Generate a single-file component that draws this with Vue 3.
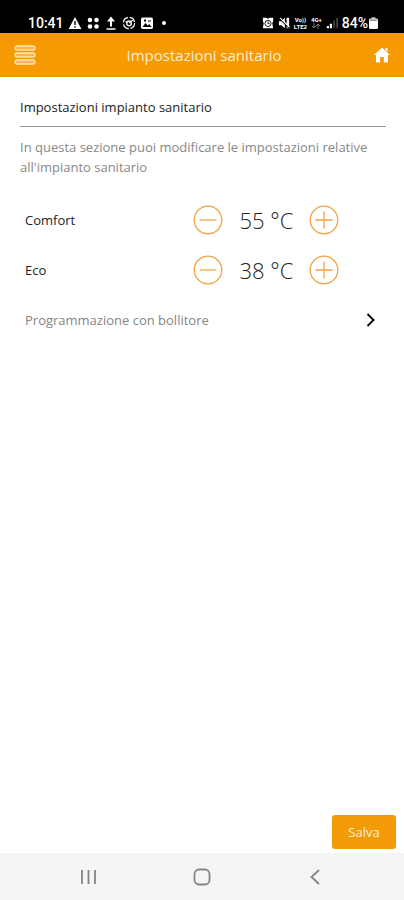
<script setup>
import { reactive } from 'vue'

const settings = reactive([
  { id: 'comfort', label: 'Comfort', value: 55 },
  { id: 'eco', label: 'Eco', value: 38 },
])
</script>

<template>
  <div class="screen">
    <div class="status">
      <div class="status-group">
        <span class="clock">10:41</span>
        <svg class="glyph" viewBox="0 0 14 14" aria-hidden="true">
          <path d="M7 1 13.4 13H.6z" fill="#fff" />
          <path d="M7 5v4M7 10.3v1.5" stroke="#000" stroke-width="1.4" />
        </svg>
        <svg class="glyph" viewBox="0 0 14 14" aria-hidden="true">
          <g fill="#fff">
            <circle cx="4" cy="4" r="2.3" /><circle cx="10.5" cy="4" r="2.3" />
            <circle cx="4" cy="10.5" r="2.3" /><circle cx="10.5" cy="10.5" r="2.3" />
          </g>
        </svg>
        <svg class="glyph" viewBox="0 0 14 14" aria-hidden="true">
          <path d="M7 10.500V3" stroke="#fff" stroke-width="2" />
          <path d="M7 .5 11 5.500H3z" fill="#fff" />
          <path d="M2.500 13h9" stroke="#bbb" stroke-width="2" />
        </svg>
        <svg class="glyph" viewBox="0 0 14 14" aria-hidden="true">
          <g fill="none" stroke="#eee">
            <circle cx="7" cy="7" r="5.6" stroke-width="1.3" stroke-dasharray="7 1.8" />
            <circle cx="7" cy="7.4" r="2.3" stroke-width="1.5" />
            <path d="m7 7 4-3M3.5 5.5l2 1" stroke-width="1.2" />
          </g>
        </svg>
        <svg class="glyph" viewBox="0 0 14 14" aria-hidden="true">
          <rect x="1" y="1.5" width="12" height="11.5" rx="1.8" fill="#fff" />
          <path d="m2.5 11 3-4 2.2 2.5L9.2 8l2.5 3zM4 3.5h2v2H4zM8 4.5h3v1H8z" fill="#000" />
        </svg>
        <span class="dot"></span>
      </div>
      <div class="status-group right">
        <svg class="glyph small" viewBox="0 0 14 14" aria-hidden="true">
          <path d="M1 1h4l2 1 2-1h4v4l-1 2 1 6H1l1-6-1-2z" fill="#fff" />
          <circle cx="7" cy="7.5" r="3.6" fill="none" stroke="#000" />
          <path d="M7 5.3v2.5h2" fill="none" stroke="#000" />
        </svg>
        <svg class="glyph small" viewBox="0 0 14 14" aria-hidden="true">
          <path d="M1 5h3l4-4v12L4 9.5H1zM10 1h3v12h-3z" fill="#fff" />
          <path d="m1 1 12 12" stroke="#000" stroke-width="1.4" />
          <path d="m2.5 1 11 11" stroke="#fff" stroke-width="1.3" />
        </svg>
        <span class="volte"><span>Vo))</span><span>LTE2</span></span>
        <span class="network">
          <span>4G+</span>
          <svg viewBox="0 0 10 6" aria-hidden="true">
            <path d="M3 0v5M1 3l2 2 2-2M7 6V1M5 3l2-2 2 2" fill="none" stroke="#777" />
          </svg>
        </span>
        <svg class="glyph small" viewBox="0 0 14 14" aria-hidden="true">
          <path d="M1 10.500h2.500V13H1zM4.500 8H7v5H4.500z" fill="#fff" />
          <path d="M8.500 4h2v9h-2zM12 1h2v12h-2z" fill="#444" />
        </svg>
        <span class="battery-text">84%</span>
        <svg class="battery" viewBox="0 0 9 12" aria-hidden="true">
          <path d="M2.500 0h4v2h-4z" fill="#888" />
          <rect y="1.500" width="9" height="10.500" rx="1.500" fill="#fff" />
          <path d="M1 3.200h7" stroke="#888" stroke-width="1.500" />
        </svg>
      </div>
    </div>

    <header class="bar">
      <button class="icon-button" type="button" aria-label="Menu">
        <svg class="menu-icon" viewBox="0 0 22 20" aria-hidden="true">
          <g fill="#f9b64b" stroke="#ffe3b3" stroke-width="1.4">
            <rect x="1" y="1" width="20" height="4" rx="2" />
            <rect x="1" y="8" width="20" height="4" rx="2" />
            <rect x="1" y="15" width="20" height="4" rx="2" />
          </g>
        </svg>
      </button>
      <h1>Impostazioni sanitario</h1>
      <a class="home" href="#" aria-label="Home">
        <svg class="home-icon" viewBox="0 0 16 16" aria-hidden="true">
          <path d="M8 .5 16 8h-2v7.500H9.800V10H6.200v5.500H2V8H0zM11.500 1h2v4l-2-2z" fill="#fff" />
        </svg>
      </a>
    </header>

    <main class="content">
      <h2>Impostazioni impianto sanitario</h2>
      <p>In questa sezione puoi modificare le impostazioni relative all'impianto sanitario</p>

      <div v-for="item in settings" :key="item.id" class="row">
        <span :id="item.id" class="label">{{ item.label }}</span>
        <div class="stepper" role="group" :aria-labelledby="item.id">
          <button type="button" class="round" :aria-label="`Diminuisci ${item.label}`" @click="item.value--">
            <svg viewBox="0 0 30 30" aria-hidden="true">
              <circle cx="15" cy="15" r="13.800" />
              <path d="M6.500 15h17" />
            </svg>
          </button>
          <output>{{ item.value }} °C</output>
          <button type="button" class="round" :aria-label="`Aumenta ${item.label}`" @click="item.value++">
            <svg viewBox="0 0 30 30" aria-hidden="true">
              <circle cx="15" cy="15" r="13.800" />
              <path d="M6.500 15h17M15 6.500v17" />
            </svg>
          </button>
        </div>
      </div>

      <a class="row link" href="#">
        <span>Programmazione con bollitore</span>
        <svg class="chevron" viewBox="0 0 10 14" aria-hidden="true">
          <path d="m1.500 1 6 6-6 6" fill="none" stroke="#111" stroke-width="2" />
        </svg>
      </a>
    </main>

    <div class="actions">
      <button class="save" type="button">Salva</button>
    </div>

    <nav class="system">
      <button type="button" aria-label="Recenti">
        <svg viewBox="0 0 18 18" aria-hidden="true"><path d="M2 2v14M8.500 2v14M15 2v14" /></svg>
      </button>
      <button type="button" aria-label="Schermata iniziale">
        <svg viewBox="0 0 18 18" aria-hidden="true"><rect x="1.500" y="1.500" width="15" height="15" rx="4.500" /></svg>
      </button>
      <button type="button" aria-label="Indietro">
        <svg viewBox="0 0 18 18" aria-hidden="true"><path d="m13 2-7.500 7L13 16" /></svg>
      </button>
    </nav>
  </div>
</template>

<style>
body {
  margin: 0;
  background: #fff;
}
</style>

<style scoped>
.screen {
  display: flex;
  flex-direction: column;
  min-height: 100vh;
  font-family: "Open Sans", "Noto Sans", sans-serif;
  color: #222;
}
button {
  padding: 0;
  border: 0;
  background: none;
  font: inherit;
  cursor: pointer;
}
svg {
  display: block;
}
.status {
  display: flex;
  justify-content: space-between;
  height: 21px;
  padding: 12px 26px 0 28px;
  background: #000;
  color: #fff;
}
.status-group {
  display: flex;
  align-items: center;
  gap: 4px;
}
.status-group.right {
  gap: 4px;
}
.clock,
.battery-text {
  font: 500 14px/20px Roboto, sans-serif;
}
.glyph {
  width: 14px;
  height: 14px;
}
.small {
  width: 12px;
  height: 12px;
}
.dot {
  width: 4px;
  height: 4px;
  margin-left: 4px;
  border-radius: 50%;
  background: #fff;
}
.volte,
.network {
  display: flex;
  flex-direction: column;
  align-items: center;
  font: 700 6px/7px Roboto, sans-serif;
}
.network svg {
  width: 10px;
  height: 6px;
}
.battery-text {
  margin-right: -3px;
}
.battery {
  width: 9px;
  height: 12px;
}
.bar {
  display: grid;
  grid-template-columns: 24px 1fr 24px;
  align-items: center;
  height: 44px;
  padding: 0 10px 0 14px;
  background: #f59a02;
}
.menu-icon {
  width: 22px;
  height: 20px;
}
h1 {
  margin: 0;
  font-size: 15px;
  font-weight: 400;
  line-height: 20px;
  text-align: center;
  color: #ffedd0;
}
.home-icon {
  width: 16px;
  height: 16px;
  margin: 0 auto;
}
.content {
  flex: 1;
  padding: 20px 18px 0 20px;
}
h2 {
  margin: 0;
  padding-bottom: 9px;
  border-bottom: 1px solid #999;
  font-size: 13px;
  font-weight: 400;
  line-height: 20px;
}
p {
  margin: 10px 0 18px;
  font-size: 13px;
  line-height: 20px;
  color: #888;
}
.row {
  display: grid;
  grid-template-columns: 48% 1fr;
  align-items: center;
  height: 50px;
  padding: 0 10px 0 5px;
  font-size: 13px;
}
.stepper {
  display: flex;
  align-items: center;
}
.round svg {
  width: 30px;
  height: 30px;
  fill: none;
  stroke: #f2a444;
  stroke-width: 1.3;
}
output {
  width: 86px;
  font-size: 22px;
  font-weight: 300;
  line-height: 30px;
  text-align: center;
}
.link {
  grid-template-columns: 1fr auto;
  color: #858585;
  text-decoration: none;
}
.chevron {
  width: 10px;
  height: 14px;
}
.actions {
  display: flex;
  justify-content: flex-end;
  padding: 0 8px 4px;
}
.save {
  width: 64px;
  height: 34px;
  border-radius: 3px;
  background: #f39a09;
  color: #ffefd5;
  font-size: 13px;
}
.system {
  display: flex;
  justify-content: center;
  gap: 95px;
  padding: 15px 0 14px;
  background: #f5f5f5;
}
.system svg {
  width: 18px;
  height: 18px;
  fill: none;
  stroke: #858585;
  stroke-width: 1.8;
}
</style>
